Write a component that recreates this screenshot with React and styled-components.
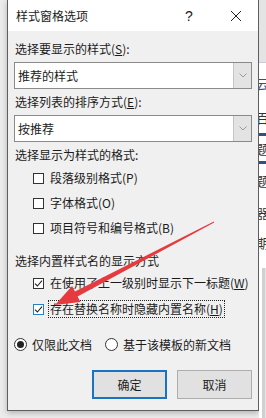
import React from 'react';
import styled, { createGlobalStyle } from 'styled-components';

const GlobalStyle = createGlobalStyle`
  html, body {
    margin: 0;
    padding: 0;
    background: #ececec;
  }
  body {
    font-family: "Noto Sans CJK SC", "Noto Sans", sans-serif;
    color: #1b1b1b;
  }
`;

const Page = styled.div`
  position: relative;
  width: 266px;
  height: 418px;
  display: flex;
  overflow: hidden;
  background: #ececec;
`;

const Gutter = styled.div`
  width: 7px;
  flex-shrink: 0;
`;

const Dialog = styled.div`
  width: 252px;
  height: 411px;
  flex-shrink: 0;
  box-sizing: border-box;
  border: 1px solid #5e5e5e;
  border-top: none;
  background: #f0f0f0;
  box-shadow: 0 2px 6px rgba(0, 0, 0, 0.25);
  display: flex;
  flex-direction: column;
`;

const TitleBar = styled.div`
  height: 31px;
  background: #ffffff;
  display: flex;
  align-items: center;
  padding-left: 8px;
  font-size: 12px;
`;

const TitleText = styled.div`
  flex: 1;
`;

const Help = styled.div`
  width: 20px;
  font-family: "Liberation Sans", sans-serif;
  font-size: 14px;
  margin-right: 25px;
`;

const Close = styled.div`
  width: 12px;
  height: 12px;
  margin-right: 16px;
  display: flex;
`;

const Body = styled.div`
  flex: 1;
  padding: 0 6px 9px 6px;
  display: flex;
  flex-direction: column;
  font-size: 12px;
`;

const Label = styled.div`
  margin-top: ${p => p.$top}px;
  padding-left: 1px;
  line-height: 16px;
  height: 16px;
  white-space: nowrap;
`;

const Select = styled.div`
  margin-top: ${p => p.$top}px;
  height: 27px;
  box-sizing: border-box;
  border: 1px solid #8a8a8a;
  background: #ffffff;
  display: flex;
  align-items: stretch;
`;

const SelectValue = styled.div`
  flex: 1;
  display: flex;
  align-items: center;
  padding-left: 3px;
  font-size: 12px;
`;

const DropButton = styled.div`
  width: 17px;
  background: #e3e3e3;
  border-left: 1px solid #c4c4c4;
  display: flex;
  align-items: center;
  justify-content: center;
`;

const Row = styled.div`
  margin-top: ${p => p.$top}px;
  padding-left: ${p => p.$indent}px;
  height: ${p => p.$height || 16}px;
  display: flex;
  align-items: center;
  white-space: nowrap;
`;

const Box = styled.div`
  width: 11px;
  height: 11px;
  box-sizing: border-box;
  border: 1px solid ${p => (p.$hover ? '#2b7fc4' : '#333333')};
  background: #ffffff;
  margin-right: 6px;
  display: flex;
  align-items: center;
  justify-content: center;
  flex-shrink: 0;
`;

const BoxText = styled.span`
  line-height: 16px;
  padding: 0 1px;
  border: 1px ${p => (p.$focus ? 'dotted #222' : 'solid transparent')};
  margin-left: -2px;
`;

const Radio = styled.div`
  width: 13px;
  height: 13px;
  box-sizing: border-box;
  border-radius: 50%;
  border: 1px solid #333333;
  background: #ffffff;
  margin-right: 5px;
  margin-left: ${p => p.$gap || 0}px;
  display: flex;
  align-items: center;
  justify-content: center;
  flex-shrink: 0;
`;

const Dot = styled.div`
  width: 7px;
  height: 7px;
  border-radius: 50%;
  background: #222222;
`;

const Buttons = styled.div`
  margin-top: 18px;
  display: flex;
  justify-content: flex-end;
  gap: 10px;
`;

const Button = styled.div`
  width: 75px;
  height: 29px;
  box-sizing: border-box;
  border: ${p => (p.$primary ? '2px solid #1a73c2' : '1px solid #adadad')};
  background: #e1e1e1;
  display: flex;
  align-items: center;
  justify-content: center;
  font-size: 12px;
`;

const DocEdge = styled.div`
  flex: 1;
  display: flex;
  flex-direction: column;
  overflow: hidden;
  background: #ffffff;
`;

const Ribbon = styled.div`
  height: 62px;
  background: #e4e4e4;
  border-bottom: 1px solid #c9ccd2;
`;

const DocGlyph = styled.div`
  margin-top: ${p => p.$top}px;
  margin-left: -3px;
  height: 14px;
  line-height: 14px;
  font-size: 13px;
  color: ${p => p.$color || '#333'};
  white-space: nowrap;
`;

const DocRule = styled.div`
  margin-top: ${p => p.$top}px;
  height: 3px;
  background: #2f4f86;
`;

const DocPanel = styled.div`
  margin-top: auto;
  height: 150px;
  background: #e6e6e6;
  border-left: 3px solid #d0d0d0;
  margin-left: 3px;
`;

const Overlay = styled.svg`
  position: absolute;
  left: 0;
  top: 0;
  pointer-events: none;
`;

const Check = () => (
  <svg width="9" height="9" viewBox="0 0 9 9">
    <path d="M1 4.6 L3.4 7 L8 1.6" fill="none" stroke="#222" strokeWidth="1.1" />
  </svg>
);

const Chevron = () => (
  <svg width="8" height="5" viewBox="0 0 8 5">
    <path d="M0.5 0.5 L4 4 L7.5 0.5" fill="none" stroke="#9a9a9a" strokeWidth="1" />
  </svg>
);

const options = [
  { top: 7, label: '段落级别格式(P)' },
  { top: 9, label: '字体格式(O)' },
  { top: 9, label: '项目符号和编号格式(B)' },
];

export default function App() {
  return (
    <Page>
      <GlobalStyle />
      <Gutter />
      <Dialog>
        <TitleBar>
          <TitleText>样式窗格选项</TitleText>
          <Help>?</Help>
          <Close>
            <svg width="12" height="12" viewBox="0 0 12 12">
              <path d="M1 1 L11 11 M11 1 L1 11" stroke="#222" strokeWidth="1" />
            </svg>
          </Close>
        </TitleBar>
        <Body>
          <Label $top={10}>选择要显示的样式(<u>S</u>):</Label>
          <Select $top={5}>
            <SelectValue>推荐的样式</SelectValue>
            <DropButton><Chevron /></DropButton>
          </Select>
          <Label $top={5}>选择列表的排序方式(<u>E</u>):</Label>
          <Select $top={5}>
            <SelectValue>按推荐</SelectValue>
            <DropButton><Chevron /></DropButton>
          </Select>
          <Label $top={5}>选择显示为样式的格式:</Label>
          {options.map(o => (
            <Row key={o.label} $top={o.top} $indent={19}>
              <Box />
              <BoxText>{o.label}</BoxText>
            </Row>
          ))}
          <Label $top={17}>选择内置样式名的显示方式</Label>
          <Row $top={6} $indent={19}>
            <Box><Check /></Box>
            <BoxText>在使用了上一级别时显示下一标题(<u>W</u>)</BoxText>
          </Row>
          <Row $top={9} $indent={19} $height={18}>
            <Box $hover><Check /></Box>
            <BoxText $focus>存在替换名称时隐藏内置名称(<u>H</u>)</BoxText>
          </Row>
          <Row $top={18} $indent={0}>
            <Radio><Dot /></Radio>
            <span>仅限此文档</span>
            <Radio $gap={13} />
            <span>基于该模板的新文档</span>
          </Row>
          <Buttons>
            <Button $primary>确定</Button>
            <Button>取消</Button>
          </Buttons>
        </Body>
      </Dialog>
      <DocEdge>
        <Ribbon />
        <DocGlyph $top={14} $color="#2f4f86">云</DocGlyph>
        <DocGlyph $top={20}>百</DocGlyph>
        <DocRule $top={8} />
        <DocGlyph $top={6}>题</DocGlyph>
        <DocRule $top={5} />
        <DocGlyph $top={10}>题</DocGlyph>
        <DocGlyph $top={18}>器</DocGlyph>
        <DocGlyph $top={16}>期</DocGlyph>
        <DocPanel />
      </DocEdge>
      <Overlay width="266" height="418" viewBox="0 0 266 418">
        <polygon
          points="213.8,221.6 75.0,291.4 72.1,285.9 55,305 80.5,301.9 77.6,296.4 214.2,222.4"
          fill="#e53b3f"
        />
      </Overlay>
    </Page>
  );
}
